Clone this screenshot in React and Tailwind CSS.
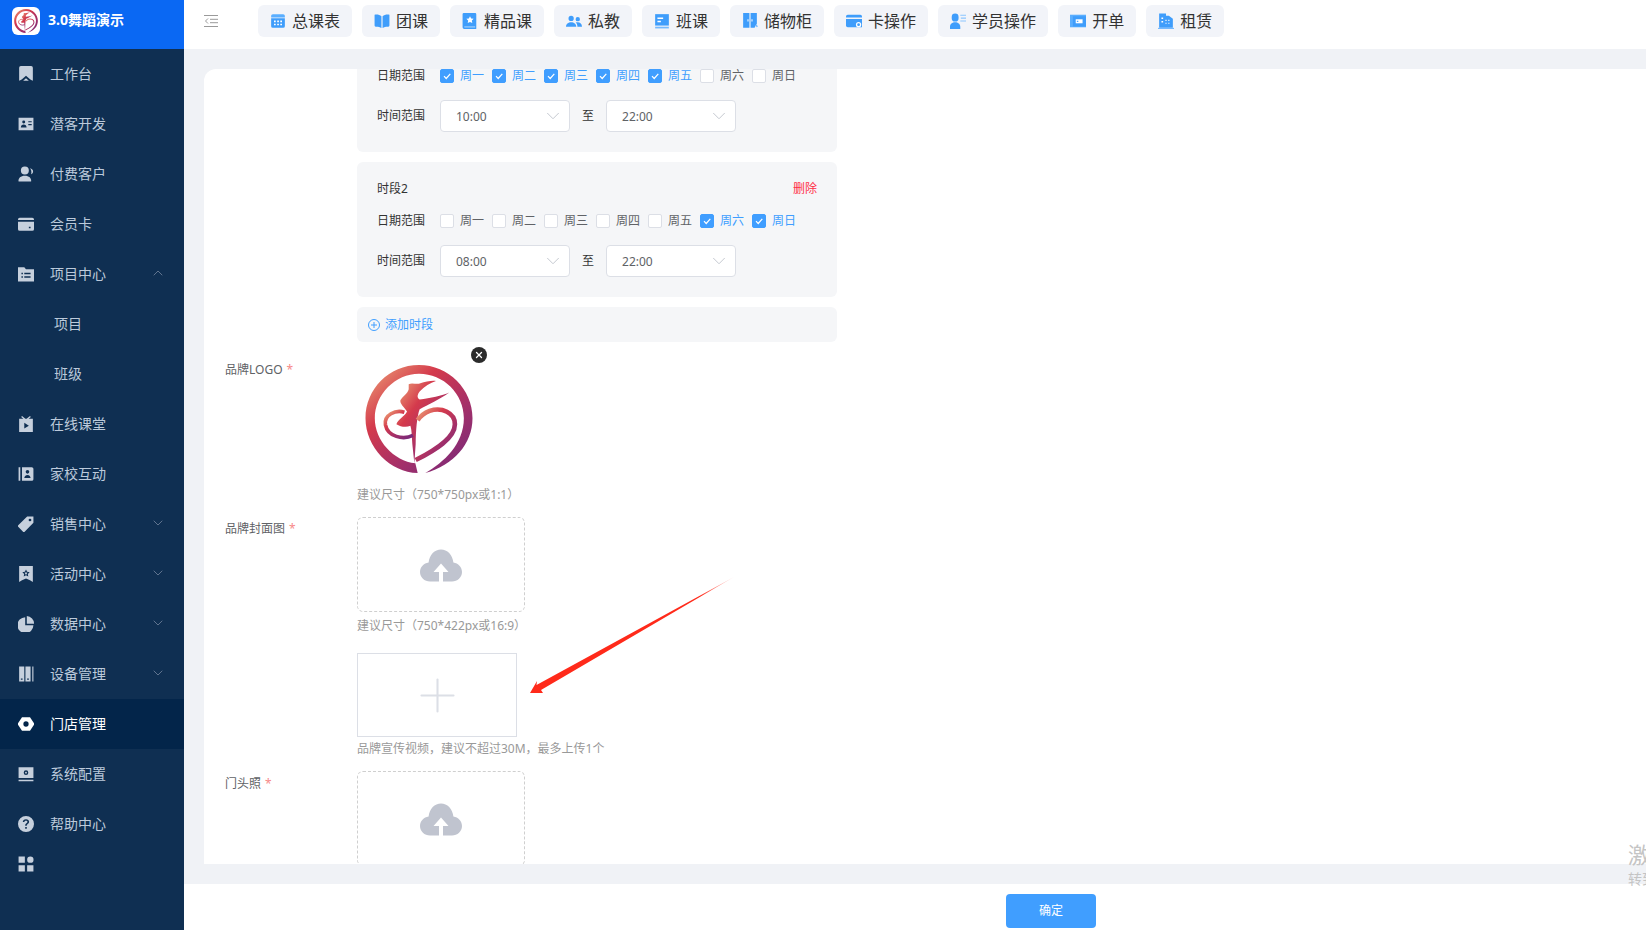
import { ChevronDown, ChevronUp, Plus, X } from "lucide-react";

function BrandLogo({ id, className }) {
  return (
    <svg className={className} viewBox="75 72 322 325">
      <defs>
        <linearGradient id={id} x1="0.1" y1="0.05" x2="0.9" y2="0.95">
          <stop offset="0" stopColor="#e89070" />
          <stop offset="0.3" stopColor="#d43a4c" />
          <stop offset="0.65" stopColor="#a63068" />
          <stop offset="1" stopColor="#7c2a78" />
        </linearGradient>
      </defs>
      <path
        fill={`url(#${id})`}
        d="M232 397C150 395 75 320 75 232C75 145 145 72 236 72C325 72 397 145 397 232C397 310 340 372 255 397C310 365 371 310 371 232C371 158 310 98 236 98C165 98 103 160 103 232C103 300 160 360 225 368Z"
      />
      <path
        fill={`url(#${id})`}
        d="M205 130C215 124 230 132 240 127C255 122 275 118 287 120C270 126 252 136 238 152C232 160 228 170 238 176C270 172 305 165 327 155C300 175 262 192 238 205C230 225 226 270 226 310L222 368L217 320C214 290 215 270 210 255C198 260 180 258 168 250C172 236 192 228 200 212C192 198 178 190 180 178C188 165 202 158 205 145Z"
      />
      <path
        fill="none"
        stroke={`url(#${id})`}
        strokeWidth="14"
        d="M226 358C285 328 344 292 344 250C344 216 305 198 268 210C252 216 240 226 232 238"
      />
      <path
        fill="none"
        stroke={`url(#${id})`}
        strokeWidth="11"
        d="M218 284C188 298 142 288 135 252C130 222 165 206 192 214"
      />
    </svg>
  );
}

// small filled icons, drawn in a 16 box with a 1 unit margin cropped off
function Ico({ children, className = "h-4 w-4" }) {
  return (
    <svg viewBox="1 1 14 14" fill="currentColor" className={`shrink-0 ${className}`}>
      {children}
    </svg>
  );
}

const tabIcons = {
  calendar: (
    <>
      <path d="M2 3.5A1.5 1.5 0 0 1 3.500 2h9A1.500 1.500 0 0 1 14 3.500V5H2z" fill="#5aaeff" />
      <path d="M2 5.500h12v7A1.500 1.500 0 0 1 12.500 14h-9A1.500 1.500 0 0 1 2 12.500z" />
      <path d="M4.500 7.500h1.500V9H4.500zM7.300 7.500h1.500V9H7.300zM10 7.500h1.500V9H10zM4.500 10.300h1.500v1.500H4.500zM7.300 10.300h1.500v1.500H7.300zM10 10.300h1.500v1.500H10z" fill="#fff" />
    </>
  ),
  book: (
    <path d="M1.500 2.500C3.500 2 6 2.500 7.500 3.800V14.200C6 13 3.500 12.800 2.500 13A1 1 0 0 1 1.500 12zM14.500 2.500C12.500 2 10 2.500 8.500 3.800V14.200C10 13 12.500 12.800 13.500 13A1 1 0 0 0 14.500 12z" />
  ),
  star: (
    <>
      <path d="M2.500 1h10A1 1 0 0 1 13.500 2v12.500A.5.500 0 0 1 13 15H3A1.500 1.500 0 0 1 1.500 13.500V2A1 1 0 0 1 2.500 1z" />
      <path d="M8 3.800l1 2 2.200.300-1.600 1.500.400 2.200L8 8.800 6 9.800l.400-2.200L4.800 6.100 7 5.800z" fill="#fff" />
      <path d="M3 12.800h9.500v.800H3z" fill="#bfe0ff" />
    </>
  ),
  people: (
    <path d="M5.500 3.500a2.300 2.300 0 1 1 0 4.600 2.300 2.300 0 0 1 0-4.600zM11.300 4.500a1.900 1.900 0 1 1 0 3.800 1.900 1.900 0 0 1 0-3.800zM1 13c0-2.500 2-4 4.500-4s4.500 1.500 4.500 4zM11 13c0-1.500-.500-2.800-1.500-3.700.600-.200 1.200-.300 1.800-.300 2 0 3.700 1.300 3.700 4z" />
  ),
  board: (
    <>
      <path d="M2 2h12v10H2z" />
      <path d="M4 5h5v1.300H4zM4 7.800h3v1.300H4z" fill="#fff" />
      <path d="M2 13h12v1.500H2z" fill="#74b9ff" />
    </>
  ),
  locker: (
    <>
      <path d="M2 1h5.500v13H2zM8.500 1H14v9.500l-1 1.500-1 2H8.500z" />
      <path d="M5.800 6.500h.900v2h-.900zM9.300 6.500h.900v2h-.900z" fill="#fff" />
      <path d="M13.500 11l1.500 1.500-1 1-1.500-1.500z" fill="#74b9ff" />
    </>
  ),
  card: (
    <>
      <path d="M2.500 2.500h11A1.500 1.500 0 0 1 15 4v1H1V4a1.500 1.500 0 0 1 1.500-1.500z" />
      <path d="M1 6.200h14v7.300H2.500A1.500 1.500 0 0 1 1 12z" />
      <circle cx="12" cy="11.200" r="2.300" fill="#fff" />
      <circle cx="12" cy="11.200" r="1.200" />
    </>
  ),
  student: (
    <>
      <path d="M5.500 1.500a3 3 0 0 1 3 3v1a3 3 0 0 1-6 0v-1a3 3 0 0 1 3-3zM1 15v-2c0-2.500 2-4 4.500-4s4.500 1.500 4.500 4v2z" />
      <path d="M10 2.500h5v1h-5zM10.500 5h4.500v1h-4.500zM10 7.500h5v1h-5z" fill="#8cc5ff" />
    </>
  ),
  wallet: (
    <>
      <path d="M1 2.500h14v11H1z" fill="#5aaeff" />
      <path d="M3.500 3.800H15v9H3.500z" />
      <path d="M6 6.500h6v3.500H6z" fill="#fff" />
      <path d="M7 7.800h1.300v1H7z" />
    </>
  ),
  building: (
    <>
      <path d="M2 1.500h6v1.800h2.500L14 6v8H2z" />
      <path d="M1 14h14v1H1z" fill="#74b9ff" />
      <path d="M4 5h1.500v1.300H4zM4 8h1.500v1.300H4zM10 7h1v1h-1zM10 9.500h1v1h-1zM7.500 7h1v1h-1zM7.500 9.500h1v1h-1z" fill="#fff" />
    </>
  ),
};

const tabs = [
  { label: "总课表", icon: "calendar" },
  { label: "团课", icon: "book" },
  { label: "精品课", icon: "star" },
  { label: "私教", icon: "people" },
  { label: "班课", icon: "board" },
  { label: "储物柜", icon: "locker" },
  { label: "卡操作", icon: "card" },
  { label: "学员操作", icon: "student" },
  { label: "开单", icon: "wallet" },
  { label: "租赁", icon: "building" },
];

const menuIcons = {
  desk: <path d="M2 2.500A1.500 1.500 0 0 1 3.500 1h9A1.500 1.500 0 0 1 14 2.500V14c-1-.500-2-1-2.500-1.500L8 9.500l-3.500 3C4 13 3 13.500 2 14zM5.500 14l2.500-2.300 2.500 2.300z" />,
  contact: (
    <path fillRule="evenodd" d="M1.500 2.500h13v11h-13zM6 5a1.300 1.300 0 1 0 0 2.600A1.300 1.300 0 0 0 6 5zM3.500 11h5c0-1.500-1-2.500-2.500-2.500S3.500 9.500 3.500 11zM10 5.500h3v1h-3zM10 8h3v1h-3z" />
  ),
  payer: (
    <path d="M7 1.500a3.500 3.500 0 1 1 0 7 3.500 3.500 0 0 1 0-7zM1.500 14.500c-.500-3 2-5 5.500-5s6 2 5.500 5zM11.500 3c1.500.300 3 1.500 2.700 3.300-.200 1-1 1.700-1.700 1.900.500-1.800.200-3.700-1-5.200z" />
  ),
  vip: (
    <path fillRule="evenodd" d="M2.500 2.500h11A1.500 1.500 0 0 1 15 4v.500H1V4a1.500 1.500 0 0 1 1.500-1.500zM1 6h14v6.500a1.500 1.500 0 0 1-1.500 1.500h-11A1.500 1.500 0 0 1 1 12.500zM10.500 10.500v1.300H12v-1.300z" />
  ),
  project: (
    <path fillRule="evenodd" d="M1 2h5.500l1.500 1.800h7V14.500H1zM4 7v1.300h1.300V7zM6.500 7v1.300H12V7zM4 10v1.300h1.300V10zM6.500 10v1.300H12V10z" />
  ),
  tv: (
    <path fillRule="evenodd" d="M4.500 1l3 2.500h1l3-2.500.700.800L10.300 3.500H14V15H2V3.500h3.700L3.800 1.800zM6.500 7v5l4-2.500z" />
  ),
  home: (
    <path fillRule="evenodd" d="M1.500 2h1.500v12H1.500zM4.500 2H13a1.500 1.500 0 0 1 1.500 1.500v9A1.500 1.500 0 0 1 13 14H4.500zM9.300 4.500a1.600 1.600 0 1 0 0 3.200 1.600 1.600 0 0 0 0-3.200zM6.500 11.500h5.500c0-1.500-1-2.700-2.700-2.700s-2.800 1.200-2.800 2.700z" />
  ),
  tag: (
    <path fillRule="evenodd" d="M9 1.500h5.500V7l-7.700 7.800a1 1 0 0 1-1.400 0L1.200 10.500a1 1 0 0 1 0-1.400zM11.500 3.300a1.200 1.200 0 1 0 0 2.400 1.200 1.200 0 0 0 0-2.400z" />
  ),
  activity: (
    <path fillRule="evenodd" d="M2 1h12v14l-2.500-1.500L8 12l-3.500 1.500L2 15zM8 4l1 2.100 2.200.300-1.600 1.500.400 2.200L8 9l-2 1.100.400-2.200-1.600-1.500L7 6.100zM8 5.800l-.400 1-1 .100.700.700-.200 1L8 8.100l.900.500-.200-1 .700-.700-1-.100z" />
  ),
  chart: <path d="M7.300 2v7.200h7.200A7 7 0 1 1 7.300 2zM8.700 1A6.500 6.500 0 0 1 15 7.800H8.700z" />,
  device: (
    <path fillRule="evenodd" d="M2 1.500h4.500v13H2zM7.500 1.500H12v13H7.500zM13.500 1.500h1v13h-1zM3.500 12v1h1.500v-1zM9 12v1h1.500v-1z" />
  ),
  store: (
    <path fillRule="evenodd" d="M4.500 2h7L15.500 8l-4 6h-7L.500 8zM8 5.700a2.300 2.300 0 1 0 0 4.600 2.300 2.300 0 0 0 0-4.600z" />
  ),
  config: (
    <path fillRule="evenodd" d="M1.500 2h13v9.500h-13zM8 4.800a2 2 0 1 0 0 4 2 2 0 0 0 0-4zM8 6a.800.800 0 1 1 0 1.600A.800.800 0 0 1 8 6zM1.500 13h13v1.300h-13z" />
  ),
  help: (
    <path fillRule="evenodd" d="M8 1a7 7 0 1 1 0 14A7 7 0 0 1 8 1zM7.300 10.700v1.400h1.400v-1.400zM8 3.800c-1.700 0-2.800 1-2.800 2.500h1.400c0-.800.500-1.200 1.400-1.200.800 0 1.300.400 1.300 1 0 .500-.300.800-.900 1.200-.800.500-1.100 1-1.100 1.900v.300h1.400v-.200c0-.500.200-.800.800-1.200.800-.500 1.200-1.100 1.200-2 0-1.400-1.100-2.300-2.700-2.300z" />
  ),
  apps: (
    <path d="M1.500 1.500H7V7H1.500zM9 4.200a2.800 2.800 0 1 1 5.600 0 2.800 2.800 0 0 1-5.600 0zM1.500 9H7v5.500H1.500zM9 9h5.500v5.500H9z" />
  ),
};

const menu = [
  { label: "工作台", icon: "desk" },
  { label: "潜客开发", icon: "contact" },
  { label: "付费客户", icon: "payer" },
  { label: "会员卡", icon: "vip" },
  { label: "项目中心", icon: "project", arrow: "up" },
  { label: "项目", sub: true },
  { label: "班级", sub: true },
  { label: "在线课堂", icon: "tv" },
  { label: "家校互动", icon: "home" },
  { label: "销售中心", icon: "tag", arrow: "down" },
  { label: "活动中心", icon: "activity", arrow: "down" },
  { label: "数据中心", icon: "chart", arrow: "down" },
  { label: "设备管理", icon: "device", arrow: "down" },
  { label: "门店管理", icon: "store", active: true },
  { label: "系统配置", icon: "config" },
  { label: "帮助中心", icon: "help" },
];

function Sidebar() {
  return (
    <aside className="flex h-full w-[184px] shrink-0 flex-col bg-[#0f2f52]">
      <div className="flex h-[49px] shrink-0 items-start gap-[8px] bg-[#0a68f3] pl-[12px] pt-[7px]">
        <div className="flex h-[28px] w-[28px] items-center justify-center rounded-[6px] bg-white">
          <BrandLogo id="logo-small" className="h-[24px] w-[24px]" />
        </div>
        <span className="text-[14px] font-bold leading-[26px] text-white">3.0舞蹈演示</span>
      </div>
      {menu.map((m) => (
        <div
          key={m.label}
          className={`flex h-[50px] shrink-0 items-center text-[14px] ${
            m.active ? "bg-[#03254a] text-white" : "text-[#bccadb]"
          } ${m.sub ? "pl-[54px]" : "pl-[18px]"}`}
        >
          {m.icon && (
            <span className={`mr-[16px] ${m.active ? "text-white" : "text-[#c6d0dd]"}`}>
              <Ico>{menuIcons[m.icon]}</Ico>
            </span>
          )}
          <span className="mb-[2px] flex-1">{m.label}</span>
          {m.arrow === "up" && <ChevronUp className="mr-[18px] mb-[2px] h-[16px] w-[16px] text-[#6d8099]" strokeWidth={1.3} />}
          {m.arrow === "down" && <ChevronDown className="mr-[18px] mb-[2px] h-[16px] w-[16px] text-[#6d8099]" strokeWidth={1.3} />}
        </div>
      ))}
      <div className="mt-[7px] pl-[18px] text-[#c6d0dd]">
        <Ico>{menuIcons.apps}</Ico>
      </div>
    </aside>
  );
}

function TopBar() {
  return (
    <header className="flex h-[49px] shrink-0 items-start bg-white">
      <svg viewBox="0 0 14 12" className="ml-[20px] mt-[15px] h-[12px] w-[14px]" fill="none" stroke="#9a9a9a" strokeWidth="1">
        <path d="M0 .5h14M6 4.300h8M6 7.700h8M0 11.500h14M4 3.500L1.500 6 4 8.500" />
      </svg>
      <div className="ml-[40px] mt-[5px] flex gap-[10px]">
        {tabs.map((t) => (
          <div
            key={t.label}
            className="flex h-[32px] items-center gap-[6px] rounded-[6px] bg-[#f2f4f9] px-[12px] text-[16px] text-[#333]"
          >
            <span className="text-[#3f9dfb]">
              <Ico>{tabIcons[t.icon]}</Ico>
            </span>
            {t.label}
          </div>
        ))}
      </div>
    </header>
  );
}

const weekdays = ["周一", "周二", "周三", "周四", "周五", "周六", "周日"];

function Check({ label, checked }) {
  return (
    <div className="flex w-[44px] items-center gap-[6px]">
      <span
        className={`flex h-[14px] w-[14px] shrink-0 items-center justify-center rounded-[2px] border ${
          checked ? "border-[#409eff] bg-[#409eff]" : "border-[#dcdfe6] bg-white"
        }`}
      >
        {checked && (
          <svg viewBox="0 0 10 10" className="h-[10px] w-[10px]" fill="none" stroke="#fff" strokeWidth="1.200">
            <path d="M2 5.200l2.200 2.300L8.300 2.800" />
          </svg>
        )}
      </span>
      <span className={`text-[12px] leading-[14px] whitespace-nowrap ${checked ? "text-[#409eff]" : "text-[#606266]"}`}>
        {label}
      </span>
    </div>
  );
}

function TimeSelect({ value }) {
  return (
    <div className="flex h-[32px] w-[130px] items-center justify-between rounded-[4px] border border-[#dcdfe6] bg-white pl-[15px] pr-[5px] text-[12px] text-[#606266]">
      <span className="mt-[2px]">{value}</span>
      <ChevronDown className="h-[22px] w-[22px] text-[#c0c4cc]" strokeWidth={1} />
    </div>
  );
}

function Period({ title, days, from, to }) {
  return (
    <div className="mb-[10px] w-[480px] rounded-[6px] bg-[#f5f6f8] px-[20px] pb-[20px] pt-[18px] text-[12px] text-[#333]">
      {title && (
        <div className="mb-[16px] flex h-[18px] items-center justify-between leading-[18px]">
          <span>{title}</span>
          <span className="text-[#ff2d46]">删除</span>
        </div>
      )}
      <div className="flex h-[14px] items-center">
        <span className="w-[63px] shrink-0 whitespace-nowrap">日期范围</span>
        <div className="flex gap-[8px]">
          {weekdays.map((d, i) => (
            <Check key={d} label={d} checked={days.includes(i)} />
          ))}
        </div>
      </div>
      <div className="mt-[17px] flex items-center">
        <span className="w-[63px] shrink-0">时间范围</span>
        <TimeSelect value={from} />
        <span className="mx-[12px] text-[#333]">至</span>
        <TimeSelect value={to} />
      </div>
    </div>
  );
}

function CloudUpload() {
  return (
    <svg viewBox="0 0 42 33" className="mt-[2px] h-[33px] w-[42px]">
      <path
        fill="#c0c4cf"
        d="M10 32.500C4.500 32.500 0 28.300 0 23C0 18 3.800 14 8.600 13.400C9.500 5.800 14.700 .5 21 .5C27.300 .5 32.500 5.800 33.400 13.400C38.200 14 42 18 42 23C42 28.300 37.500 32.500 32 32.500H23V23H28.500L21 14.500L13.500 23H19V32.500Z"
      />
    </svg>
  );
}

function UploadBox() {
  return (
    <div className="flex h-[95px] w-[168px] shrink-0 items-center justify-center rounded-[6px] border border-dashed border-[#cfcfcf]">
      <CloudUpload />
    </div>
  );
}

function FieldLabel({ children, required, className = "" }) {
  return (
    <div className={`w-[132px] shrink-0 text-[12px] leading-[18px] text-[#606266] ${className}`}>
      {children}
      {required && <span className="ml-[4px] text-[#f78989]">*</span>}
    </div>
  );
}

function Hint({ children, className = "" }) {
  return <div className={`whitespace-nowrap text-[12px] leading-[18px] text-[#999] ${className}`}>{children}</div>;
}

function Form() {
  return (
    <div className="-mt-[18px] pl-[21px]">
      <div className="ml-[132px]">
        <Period days={[0, 1, 2, 3, 4]} from="10:00" to="22:00" />
        <Period title="时段2" days={[5, 6]} from="08:00" to="22:00" />
        <div className="flex h-[35px] w-[480px] items-center gap-[5px] rounded-[6px] bg-[#f5f6f8] pl-[11px] text-[12px] text-[#409eff]">
          <svg viewBox="0 0 12 12" className="h-[12px] w-[12px]" fill="none" stroke="#409eff" strokeWidth="1">
            <circle cx="6" cy="6" r="5.500" />
            <path d="M3 6h6M6 3v6" />
          </svg>
          添加时段
        </div>
      </div>

      <div className="mt-[12px] flex">
        <FieldLabel required className="pt-[7px]">品牌LOGO</FieldLabel>
        <div>
          <div className="relative pl-[8px] pt-[11px]">
            <BrandLogo id="logo-big" className="h-[108px] w-[108px]" />
            <span className="absolute -top-[7px] left-[114px] flex h-[16px] w-[16px] items-center justify-center rounded-full bg-[#2b2b2b] text-white">
              <X className="h-[10px] w-[10px]" strokeWidth={3} />
            </span>
          </div>
          <Hint className="mt-[13px]">建议尺寸（750*750px或1:1）</Hint>
        </div>
      </div>

      <div className="mt-[13px] flex">
        <FieldLabel required className="pt-[3px]">品牌封面图</FieldLabel>
        <div>
          <UploadBox />
          <Hint className="mt-[5px]">建议尺寸（750*422px或16:9）</Hint>
        </div>
      </div>

      <div className="ml-[132px] mt-[18px]">
        <div className="flex h-[84px] w-[160px] items-center justify-center border border-[#dcdfe6]">
          <Plus className="h-[55px] w-[55px] text-[#dcdfe6]" strokeWidth={0.9} />
        </div>
        <Hint className="mt-[3px]">品牌宣传视频，建议不超过30M，最多上传1个</Hint>
      </div>

      <div className="mt-[13px] flex">
        <FieldLabel required className="pt-[4px]">门头照</FieldLabel>
        <UploadBox />
      </div>
    </div>
  );
}

export default function App() {
  return (
    <div
      className="relative flex h-[930px] w-[1646px] overflow-hidden bg-white"
      style={{ fontFamily: '"Noto Sans", "Noto Sans CJK SC", sans-serif' }}
    >
      <Sidebar />
      <div className="flex h-full min-w-0 flex-1 flex-col">
        <TopBar />
        <main className="h-[835px] shrink-0 bg-[#f0f2f6] pl-[20px] pt-[20px] pb-[20px]">
          <div className="h-[795px] overflow-hidden rounded-tl-[12px] bg-white">
            <Form />
          </div>
        </main>
        <footer className="h-[46px] shrink-0 pl-[822px] pt-[10px]">
          <button className="h-[34px] w-[90px] rounded-[4px] bg-[#409eff] text-[12px] text-white">确定</button>
        </footer>
      </div>

      {/* red annotation arrow drawn on top of the screenshot */}
      <svg viewBox="520 570 220 135" className="pointer-events-none absolute left-[520px] top-[570px] h-[135px] w-[220px]">
        <defs>
          <linearGradient id="arrow-fade" gradientUnits="userSpaceOnUse" x1="735" y1="577" x2="700" y2="597">
            <stop offset="0" stopColor="#ff2a1a" stopOpacity="0.15" />
            <stop offset="1" stopColor="#ff2a1a" />
          </linearGradient>
        </defs>
        <path fill="url(#arrow-fade)" d="M734 577L541 690L543 693L530 693L537 681L536.500 685Z" />
      </svg>

      {/* activation watermark running off the right edge */}
      <div className="pointer-events-none absolute left-[1628px] top-[840px] whitespace-nowrap text-[#c4c4c4]">
        <div className="text-[22px] leading-[28px]">激活 Windows</div>
        <div className="mt-[1px] text-[14px] leading-[20px]">转到“设置”以激活 Windows。</div>
      </div>
    </div>
  );
}
